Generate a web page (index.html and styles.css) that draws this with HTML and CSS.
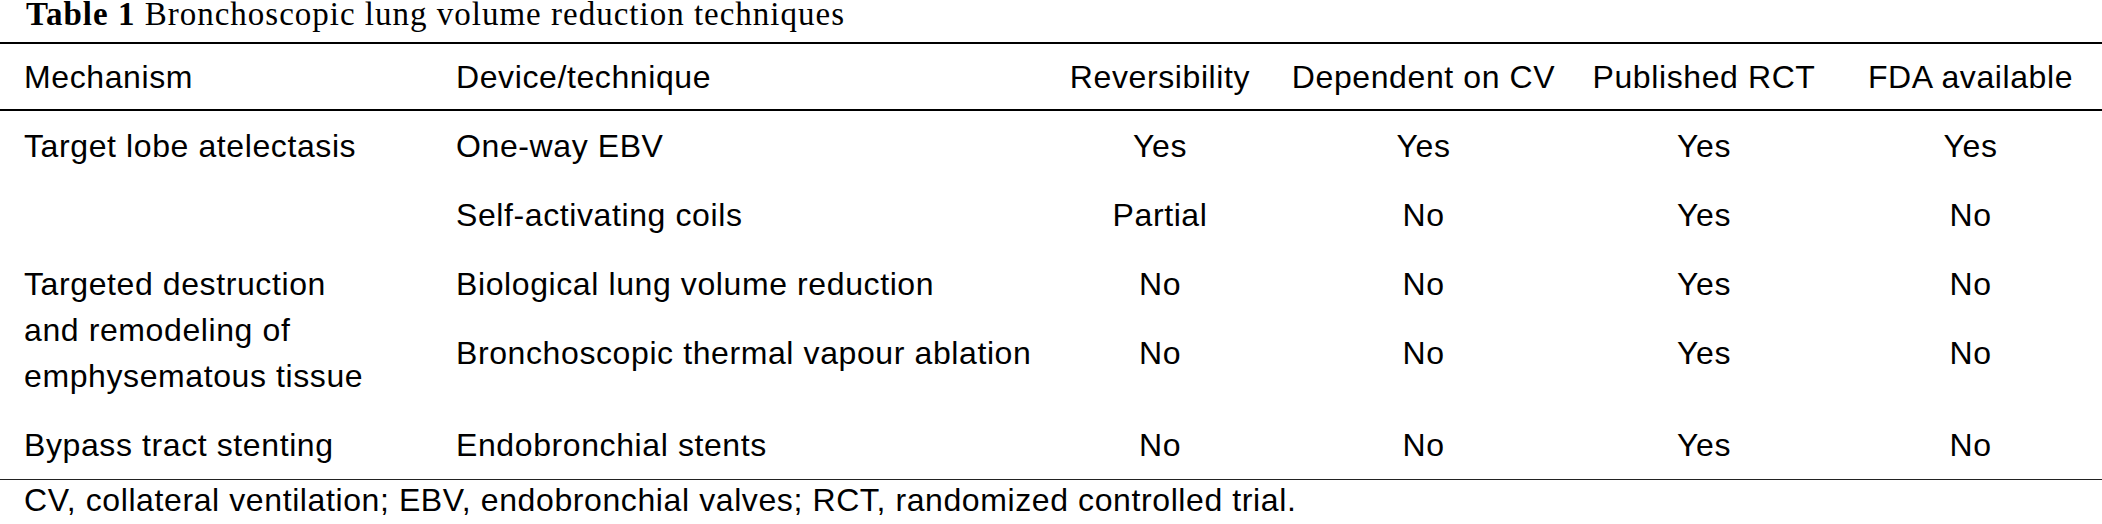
FILE: index.html
```html
<!DOCTYPE html>
<html>
<head>
<meta charset="utf-8">
<link rel="stylesheet" href="styles.css">
</head>
<body>
<div class="page">
  <div class="caption"><b>Table 1</b> Bronchoscopic lung volume reduction techniques</div>
  <table class="tbl">
    <colgroup>
      <col class="c1"><col class="c2"><col class="c3"><col class="c4"><col class="c5"><col class="c6">
    </colgroup>
    <thead>
      <tr>
        <th class="left first">Mechanism</th>
        <th class="left dev">Device/technique</th>
        <th>Reversibility</th>
        <th>Dependent on CV</th>
        <th>Published RCT</th>
        <th>FDA available</th>
      </tr>
    </thead>
    <tbody>
      <tr>
        <td class="left first">Target lobe atelectasis</td>
        <td class="left dev">One-way EBV</td>
        <td>Yes</td><td>Yes</td><td>Yes</td><td>Yes</td>
      </tr>
      <tr>
        <td class="left first"></td>
        <td class="left dev">Self-activating coils</td>
        <td>Partial</td><td>No</td><td>Yes</td><td>No</td>
      </tr>
      <tr>
        <td class="left first" rowspan="2">Targeted destruction<br>and remodeling of<br>emphysematous tissue</td>
        <td class="left dev">Biological lung volume reduction</td>
        <td>No</td><td>No</td><td>Yes</td><td>No</td>
      </tr>
      <tr class="tall">
        <td class="left dev">Bronchoscopic thermal vapour ablation</td>
        <td>No</td><td>No</td><td>Yes</td><td>No</td>
      </tr>
      <tr class="last">
        <td class="left first">Bypass tract stenting</td>
        <td class="left dev">Endobronchial stents</td>
        <td>No</td><td>No</td><td>Yes</td><td>No</td>
      </tr>
    </tbody>
  </table>
  <div class="note">CV, collateral ventilation; EBV, endobronchial valves; RCT, randomized controlled trial.</div>
</div>
</body>
</html>
```
FILE: styles.css
```css
html, body {
  margin: 0;
  padding: 0;
  background: #ffffff;
}

.page {
  width: 2102px;
  color: #000;
}

.caption {
  font-family: "Liberation Serif", "Times New Roman", serif;
  font-size: 33px;
  letter-spacing: 1px;
  line-height: 28px;
  height: 42px;
  padding-left: 26px;
  white-space: nowrap;
  box-sizing: border-box;
}

.caption b {
  font-weight: bold;
}

.tbl {
  width: 2102px;
  border-collapse: collapse;
  table-layout: fixed;
  font-family: "Liberation Sans", Arial, sans-serif;
  font-size: 32px;
  letter-spacing: 0.6px;
}

.c1 { width: 454px; }
.c2 { width: 588px; }
.c3 { width: 236px; }
.c4 { width: 291px; }
.c5 { width: 270px; }
.c6 { width: 263px; }

.tbl th,
.tbl td {
  padding: 0;
  text-align: center;
  vertical-align: top;
  line-height: 46px;
  white-space: nowrap;
}

.tbl th {
  font-weight: normal;
  padding-top: 9.5px;
  padding-bottom: 9.5px;
  border-top: 2px solid #000;
  border-bottom: 2px solid #000;
}

.tbl td {
  padding-top: 11.5px;
  padding-bottom: 11.5px;
}

.tbl .tall td {
  padding-bottom: 34.5px;
}

.tbl .last td {
  border-bottom: 1.5px solid #222;
}

.tbl .left {
  text-align: left;
}

.tbl .first {
  padding-left: 24px;
}

.tbl .dev {
  padding-left: 2px;
}

.note {
  font-family: "Liberation Sans", Arial, sans-serif;
  font-size: 32px;
  letter-spacing: 0.6px;
  line-height: 40px;
  padding-left: 24px;
  white-space: nowrap;
}
```
